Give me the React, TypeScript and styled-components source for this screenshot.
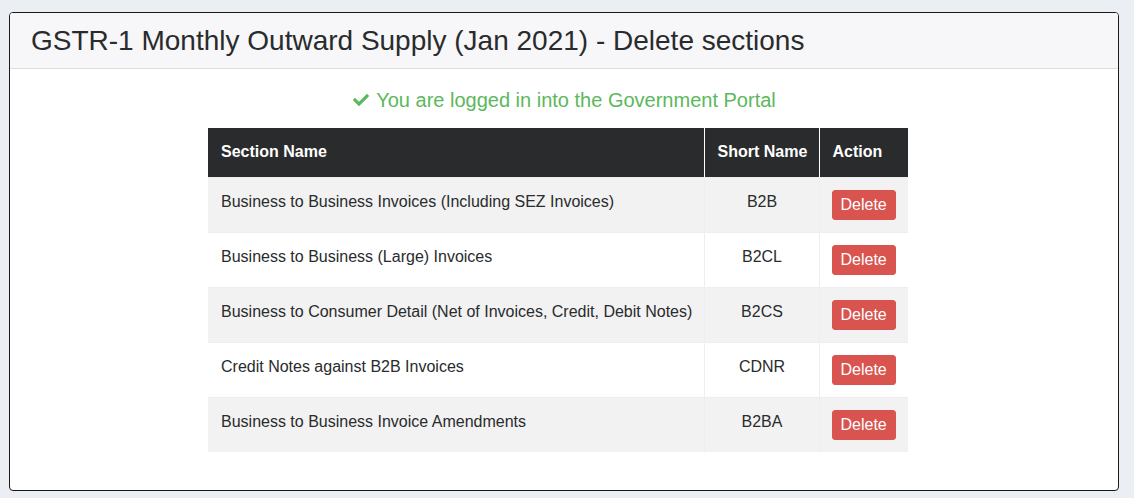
import React from "react";
import styled, { createGlobalStyle } from "styled-components";

const GlobalStyle = createGlobalStyle`
  * { box-sizing: border-box; }
  body {
    margin: 0;
    background: #ebeef3;
    font-family: "Liberation Sans", Arial, Helvetica, sans-serif;
    color: #292b2c;
  }
`;

const Page = styled.div`
  padding: 12px 15px 8px 9px;
`;

const Card = styled.div`
  background: #fff;
  border: 1px solid #1a1a1a;
  border-radius: 4px;
  overflow: hidden;
`;

const CardHeader = styled.div`
  background: #f7f7f9;
  border-bottom: 1px solid #dddddd;
  padding: 12px 21px;
`;

const Title = styled.h3`
  margin: 0;
  font-size: 28px;
  font-weight: 400;
  line-height: 31px;
  color: #292b2c;
`;

const CardBody = styled.div`
  padding: 19px 20px 38px;
  display: flex;
  flex-direction: column;
  align-items: center;
`;

const Status = styled.div`
  color: #5cb85c;
  font-size: 20px;
  line-height: 24px;
  margin-bottom: 16px;
  display: flex;
  align-items: center;
  gap: 6px;
`;

const Table = styled.table`
  width: 700px;
  margin-right: 12px;
  border-collapse: collapse;
  table-layout: fixed;
  font-size: 16px;
  white-space: nowrap;
`;

const HeadCell = styled.th<{ $center?: boolean; $width?: number }>`
  width: ${(p) => (p.$width ? `${p.$width}px` : "auto")};
  background: #292b2c;
  color: #fff;
  font-weight: 700;
  text-align: ${(p) => (p.$center ? "center" : "left")};
  padding: 12px 12px 13px 13px;
  line-height: 24px;
  border-left: 1px solid #fff;
  &:first-child { border-left: none; }
`;

const Row = styled.tr<{ $striped: boolean }>`
  background: ${(p) => (p.$striped ? "#f2f2f2" : "#fff")};
`;

const Cell = styled.td<{ $center?: boolean }>`
  padding: 12px 12px 12px 13px;
  line-height: 24px;
  vertical-align: top;
  text-align: ${(p) => (p.$center ? "center" : "left")};
  border-left: 1px solid #eceeef;
  border-top: 1px solid #eceeef;
  color: #292b2c;
  &:first-child { border-left: none; }
  &:last-child { padding-left: 12px; }
`;

const DeleteButton = styled.button`
  background: #d9534f;
  color: #fff;
  border: 1px solid #d9534f;
  border-radius: 3px;
  font-family: inherit;
  font-size: 16px;
  line-height: 20px;
  padding: 4px 8px;
  cursor: pointer;
`;

const CheckIcon = () => (
  <svg width="18" height="16" viewBox="0 0 512 512">
    <path
      fill="#5cb85c"
      d="M173.9 439.4l-166.4-166.4c-10-10-10-26.2 0-36.2l36.2-36.2c10-10 26.2-10 36.2 0L192 312.7 432.1 72.6c10-10 26.2-10 36.2 0l36.2 36.2c10 10 10 26.2 0 36.2l-294.4 294.4c-10 10-26.2 10-36.2 0z"
    />
  </svg>
);

const sections = [
  { name: "Business to Business Invoices (Including SEZ Invoices)", short: "B2B" },
  { name: "Business to Business (Large) Invoices", short: "B2CL" },
  { name: "Business to Consumer Detail (Net of Invoices, Credit, Debit Notes)", short: "B2CS" },
  { name: "Credit Notes against B2B Invoices", short: "CDNR" },
  { name: "Business to Business Invoice Amendments", short: "B2BA" },
];

export default function App() {
  return (
    <>
      <GlobalStyle />
      <Page>
        <Card>
          <CardHeader>
            <Title>GSTR-1 Monthly Outward Supply (Jan 2021) - Delete sections</Title>
          </CardHeader>
          <CardBody>
            <Status>
              <CheckIcon />
              You are logged in into the Government Portal
            </Status>
            <Table>
              <thead>
                <tr>
                  <HeadCell $width={496}>Section Name</HeadCell>
                  <HeadCell $center $width={115}>Short Name</HeadCell>
                  <HeadCell $width={89}>Action</HeadCell>
                </tr>
              </thead>
              <tbody>
                {sections.map((s, i) => (
                  <Row key={s.short} $striped={i % 2 === 0}>
                    <Cell>{s.name}</Cell>
                    <Cell $center>{s.short}</Cell>
                    <Cell>
                      <DeleteButton>Delete</DeleteButton>
                    </Cell>
                  </Row>
                ))}
              </tbody>
            </Table>
          </CardBody>
        </Card>
      </Page>
    </>
  );
}
